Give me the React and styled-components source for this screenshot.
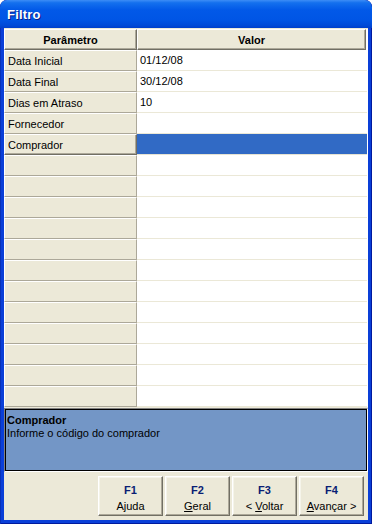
import React from "react";
import styled, { createGlobalStyle } from "styled-components";

const Global = createGlobalStyle`
  html, body { margin: 0; padding: 0; background: #ffffff; }
  body { font-family: "Liberation Sans", Arial, sans-serif; font-size: 11px; }
  * { box-sizing: border-box; }
`;

const Window = styled.div`
  width: 372px;
  height: 524px;
  background: #0a3fd8;
  border-radius: 7px 7px 0 0;
  display: flex;
  flex-direction: column;
  overflow: hidden;
  box-shadow: inset 1px 0 #0831b8, inset -1px 0 #001a9e, inset 0 -1px #001a9e;
`;

const TitleBar = styled.div`
  height: 28px;
  flex: none;
  display: flex;
  align-items: center;
  padding: 0 7px;
  background: linear-gradient(
    #3d8df6 0%,
    #1470ee 10%,
    #0259e8 35%,
    #0055e5 70%,
    #004ad8 90%,
    #003fcb 100%
  );
  border-radius: 7px 7px 0 0;
`;

const Title = styled.span`
  color: #ffffff;
  font-weight: bold;
  font-size: 13px;
  text-shadow: 1px 1px #0a1e8a;
  letter-spacing: 0.2px;
`;

const Client = styled.div`
  flex: 1;
  margin: 0 4px 4px 4px;
  background: #ece9d8;
  display: flex;
  flex-direction: column;
  padding-top: 1px;
`;

const Grid = styled.div`
  display: flex;
  flex-direction: column;
  background: #ffffff;
`;

const Row = styled.div`
  display: grid;
  grid-template-columns: 133px 1fr;
  height: 21px;
`;

const HeaderCell = styled.div`
  display: flex;
  align-items: center;
  justify-content: center;
  background: #ece9d8;
  font-weight: bold;
  font-size: 11px;
  color: #000;
  border-top: 1px solid #ffffff;
  border-left: 1px solid #ffffff;
  border-right: 1px solid #716f64;
  border-bottom: 1px solid #716f64;
  box-shadow: inset -1px -1px #aca899;
  margin-right: ${(p) => (p.$last ? "2px" : "0")};
`;

const ParamCell = styled.div`
  display: flex;
  align-items: center;
  padding-left: 3px;
  background: #ece9d8;
  color: #000;
  border-top: 1px solid #ffffff;
  border-left: 1px solid #ffffff;
  border-right: 1px solid ${(p) => (p.$selected ? "#716f64" : "#aca899")};
  border-bottom: 1px solid ${(p) => (p.$selected ? "#716f64" : "#aca899")};
  box-shadow: ${(p) => (p.$selected ? "inset -1px -1px #aca899" : "none")};
  white-space: nowrap;
`;

const ValueCell = styled.div`
  display: flex;
  align-items: center;
  padding-left: 3px;
  margin-right: 1px;
  background: ${(p) => (p.$selected ? "#316ac5" : "#ffffff")};
  color: ${(p) => (p.$selected ? "#ffffff" : "#000")};
  border-bottom: 1px solid ${(p) => (p.$selected ? "#e6e3d3" : "#ebe8d7")};
  white-space: nowrap;
`;

const Description = styled.div`
  height: 64px;
  flex: none;
  margin-top: 1px;
  border-top: 1px solid #808080;
  border-left: 1px solid #808080;
  border-right: 1px solid #ffffff;
  border-bottom: 1px solid #ffffff;
`;

const DescInner = styled.div`
  height: 100%;
  border: 1px solid #000;
  background: #7396c6;
  padding: 4px 1px 0;
  color: #000;
  line-height: 13px;
`;

const DescTitle = styled.div`
  font-weight: bold;
`;

const ButtonBar = styled.div`
  flex: 1;
  display: flex;
  justify-content: flex-end;
  align-items: flex-start;
  gap: 2px;
  padding: 4px 4px 0 0;
`;

const FButton = styled.button`
  width: 65px;
  height: 40px;
  background: #ece9d8;
  border-top: 1px solid #ffffff;
  border-left: 1px solid #ffffff;
  border-right: 1px solid #716f64;
  border-bottom: 1px solid #716f64;
  box-shadow: inset -1px -1px #aca899, inset 1px 1px #f5f4ea;
  padding: 7px 0 0;
  margin: 0;
  display: flex;
  flex-direction: column;
  align-items: center;
  justify-content: flex-start;
  gap: 3px;
  font-family: "Liberation Sans", Arial, sans-serif;
  font-size: 11px;
  color: #000;
`;

const FKey = styled.span`
  font-weight: bold;
  color: #0a1e74;
  font-size: 11px;
  line-height: 13px;
`;

const FLabel = styled.span`
  line-height: 13px;
  u { text-decoration: underline; }
`;

const rows = [
  ["Data Inicial", "01/12/08"],
  ["Data Final", "30/12/08"],
  ["Dias em Atraso", "10"],
  ["Fornecedor", ""],
  ["Comprador", "", true],
];
while (rows.length < 17) rows.push(["", ""]);

const buttons = [
  { key: "F1", label: <>Ajuda</> },
  { key: "F2", label: <><u>G</u>eral</> },
  { key: "F3", label: <>&lt; <u>V</u>oltar</> },
  { key: "F4", label: <><u>A</u>vançar &gt;</> },
];

export default function App() {
  return (
    <>
      <Global />
      <Window>
        <TitleBar>
          <Title>Filtro</Title>
        </TitleBar>
        <Client>
          <Grid>
            <Row>
              <HeaderCell>Parâmetro</HeaderCell>
              <HeaderCell $last>Valor</HeaderCell>
            </Row>
            {rows.map(([p, v, sel], i) => (
              <Row key={i}>
                <ParamCell $selected={sel}>{p}</ParamCell>
                <ValueCell $selected={sel}>{v}</ValueCell>
              </Row>
            ))}
          </Grid>
          <Description>
            <DescInner>
              <DescTitle>Comprador</DescTitle>
              <div>Informe o código do comprador</div>
            </DescInner>
          </Description>
          <ButtonBar>
            {buttons.map((b) => (
              <FButton key={b.key}>
                <FKey>{b.key}</FKey>
                <FLabel>{b.label}</FLabel>
              </FButton>
            ))}
          </ButtonBar>
        </Client>
      </Window>
    </>
  );
}
